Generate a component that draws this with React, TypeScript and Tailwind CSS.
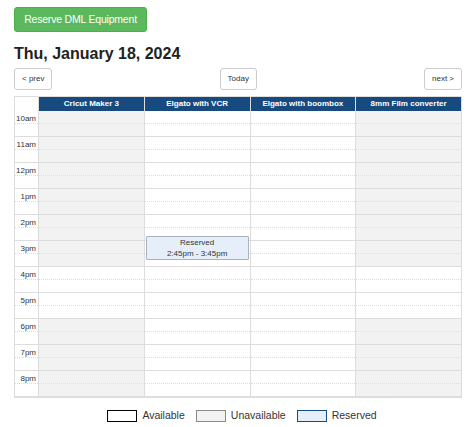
import React from 'react';

const hours = ['10am', '11am', '12pm', '1pm', '2pm', '3pm', '4pm', '5pm', '6pm', '7pm', '8pm'];

type Column = { name: string; unavailable: number[] };

const columns: Column[] = [
  { name: 'Cricut Maker 3', unavailable: [0, 1, 2, 3, 4, 5, 8, 9, 10] },
  { name: 'Elgato with VCR', unavailable: [] },
  { name: 'Elgato with boombox', unavailable: [] },
  { name: '8mm Film converter', unavailable: [0, 1, 2, 3, 4, 5, 8, 9, 10] },
];

function Slot({ gray, label }: { gray?: boolean; label?: string }) {
  return (
    <div className={`flex h-[26px] flex-col border-b border-[#ddd] ${gray ? 'bg-[#f2f2f2]' : 'bg-white'}`}>
      <div className="h-[13px] border-b border-dotted border-[#ddd] pr-[2px] pt-[3px] text-right text-[8px] leading-[9px] text-[#333]">
        {label}
      </div>
      <div className="flex-1" />
    </div>
  );
}

function NavButton({ children }: { children: React.ReactNode }) {
  return (
    <button className="h-[22px] rounded-[3px] border border-[#ccc] bg-white px-[7px] text-[8px] text-[#333]">
      {children}
    </button>
  );
}

export default function App() {
  return (
    <div className="min-h-screen bg-white pl-[14px] pr-[10px] pt-[6px] font-['Liberation_Sans',Arial,sans-serif] text-[#333]">
      <button className="h-[25px] w-[133px] rounded-[3px] border border-[#4cae4c] bg-[#5cb85c] text-[10.5px] tracking-[-0.2px] text-white">
        Reserve DML Equipment
      </button>
      <h1 className="mt-[11px] text-[16px] font-bold leading-[22px] text-[#222]">Thu, January 18, 2024</h1>

      <div className="mt-[3px] flex items-center justify-between">
        <NavButton>&lt; prev</NavButton>
        <NavButton>Today</NavButton>
        <NavButton>next &gt;</NavButton>
      </div>

      <div className="mt-[6px] w-[448px] border border-[#ddd]">
        <div className="grid grid-cols-[23px_1fr_1fr_1fr_1fr]">
          <div className="h-[14px] bg-white" />
          {columns.map((c) => (
            <div
              key={c.name}
              className="flex h-[14px] items-center justify-center border-l border-[#ddd] bg-[#174a7e] text-[8px] font-bold text-white"
            >
              {c.name}
            </div>
          ))}
        </div>
        <div className="grid grid-cols-[23px_1fr_1fr_1fr_1fr]">
          <div className="flex flex-col">
            {hours.map((h) => (
              <Slot key={h} label={h} />
            ))}
          </div>
          {columns.map((c, ci) => (
            <div key={c.name} className="relative flex flex-col border-l border-[#ddd]">
              {hours.map((h, i) => (
                <Slot key={h} gray={c.unavailable.includes(i)} />
              ))}
              {ci === 1 && (
                <div className="absolute left-[1px] right-[1px] top-[125px] flex h-[24px] flex-col items-center justify-center rounded-[1px] border border-[#a9b3c0] bg-[#e6eff9] text-[8px] leading-[11px] text-[#333]">
                  <span>Reserved</span>
                  <span>2:45pm - 3:45pm</span>
                </div>
              )}
            </div>
          ))}
        </div>
      </div>

      <div className="mt-[10px] flex w-[448px] items-center justify-center gap-[11px] pl-[8px] text-[10.5px] text-[#333]">
        <div className="flex items-center gap-[5px]">
          <span className="h-[12px] w-[30px] border border-black bg-white" />
          <span>Available</span>
        </div>
        <div className="flex items-center gap-[5px]">
          <span className="h-[12px] w-[30px] border border-[#888] bg-[#f2f2f2]" />
          <span>Unavailable</span>
        </div>
        <div className="flex items-center gap-[5px]">
          <span className="h-[12px] w-[30px] border border-[#174a7e] bg-[#e6eff9]" />
          <span>Reserved</span>
        </div>
      </div>
    </div>
  );
}
